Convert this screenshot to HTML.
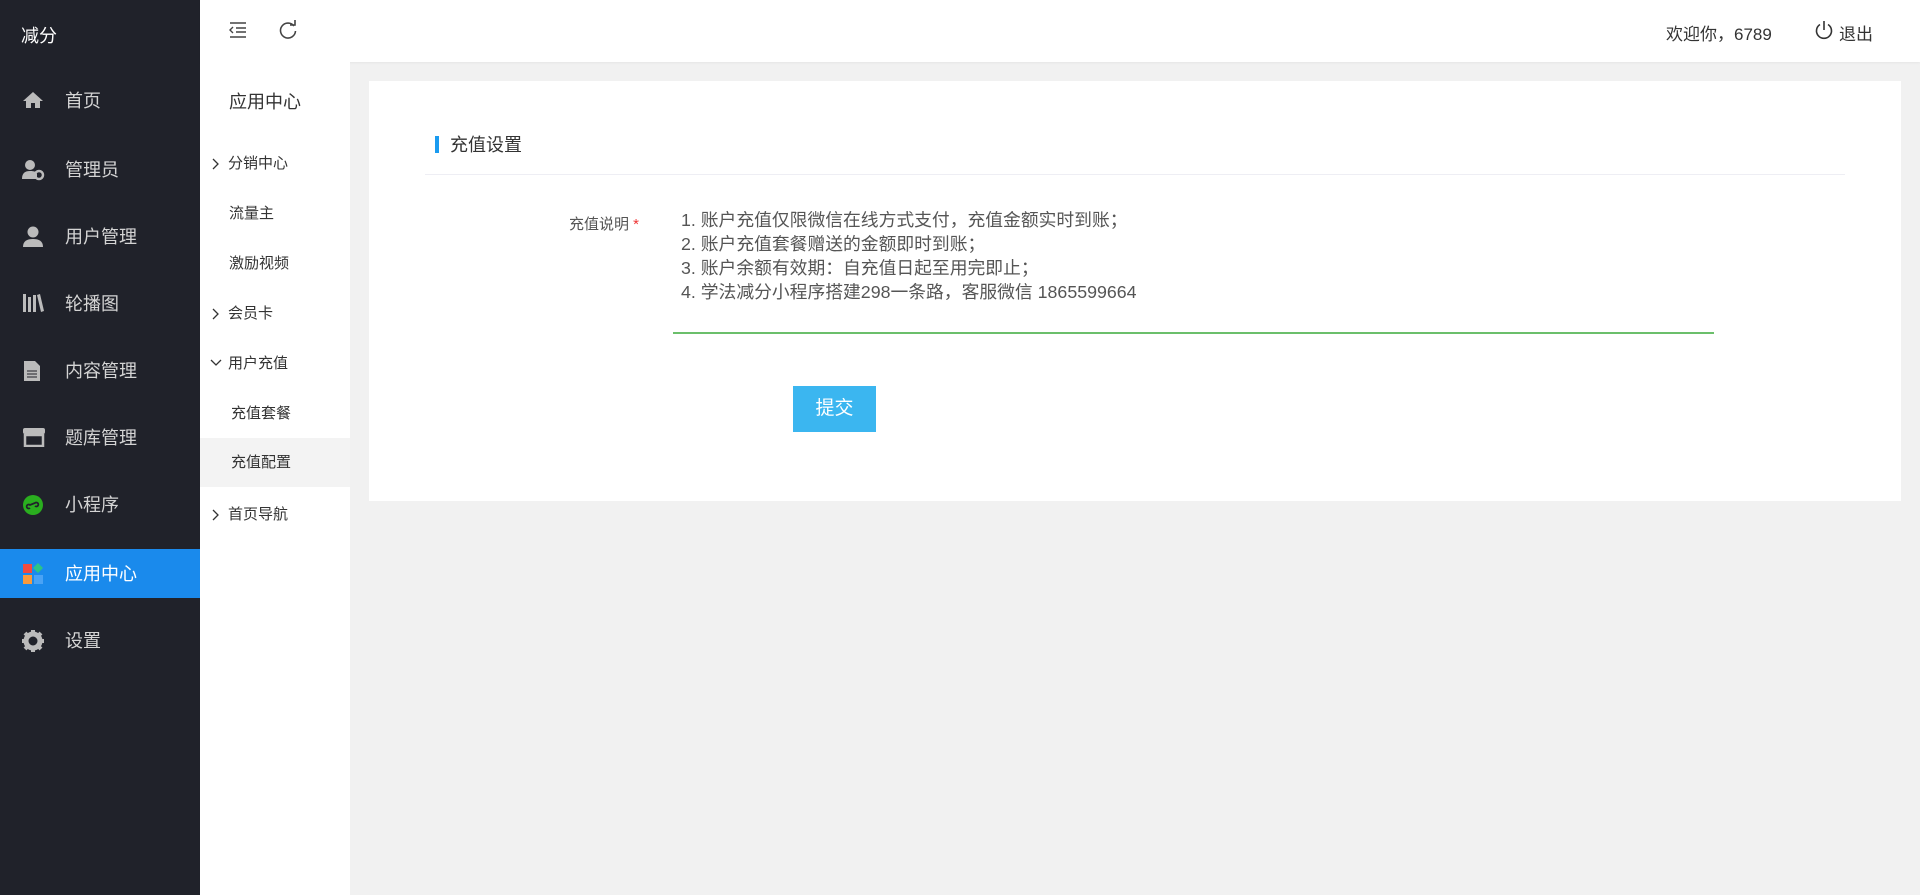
<!DOCTYPE html>
<html><head><meta charset="utf-8"><style>
*{margin:0;padding:0;box-sizing:border-box}
body{width:1920px;height:895px;overflow:hidden;background:#f1f1f1;font-family:"Liberation Sans","Noto Sans CJK SC",sans-serif;position:relative;color:#333}
.side{position:absolute;left:0;top:0;width:200px;height:895px;background:#20222a}
.logo{position:absolute;left:21px;top:22px;color:#fff;font-size:18px}
.mi{position:absolute;left:0;width:200px;height:49px;color:#d4d4d4;font-size:18px;line-height:49px}
.mi span{position:absolute;left:65px;top:1px}
.mi svg{position:absolute;left:22px;top:14px}
.mi.act{background:#1a8aec;color:#fff}
.sub{position:absolute;left:200px;top:62px;width:150px;height:833px;background:#fff}
.si{position:absolute;left:0;width:150px;height:49px;line-height:49px;font-size:15px;color:#333}
.si.act{background:#f3f3f3}
.si svg{position:absolute;left:12px;top:19px}
.hdr{position:absolute;left:200px;top:0;width:1720px;height:62px;background:#fff;box-shadow:0 1px 2px rgba(0,0,0,.05)}
.card{position:absolute;left:369px;top:81px;width:1532px;height:420px;background:#fff}
</style></head><body>
<div class="side">
<div class="logo">减分</div>
<div class="mi" style="top:76px"><svg width="22" height="20" viewBox="0 0 22 20"><path d="M11 2L1 11h3v7h5v-5h4v5h5v-7h3z" fill="#bbb"/></svg><span>首页</span></div>
<div class="mi" style="top:145px"><svg width="24" height="22" viewBox="0 0 24 22"><circle cx="8" cy="6" r="5" fill="#bbb"/><path d="M0 20c0-6 3-8 8-8s6 1 7 3v5z" fill="#bbb"/><circle cx="17" cy="16" r="4" fill="none" stroke="#bbb" stroke-width="2.5"/></svg><span>管理员</span></div>
<div class="mi" style="top:212px"><svg width="22" height="22" viewBox="0 0 22 22"><circle cx="11" cy="6" r="5.5" fill="#bbb"/><path d="M1 21c0-6 4-8 10-8s10 2 10 8z" fill="#bbb"/></svg><span>用户管理</span></div>
<div class="mi" style="top:279px"><svg width="22" height="20" viewBox="0 0 22 20"><rect x="1" y="1" width="3" height="18" fill="#bbb"/><rect x="6" y="4" width="3" height="15" fill="#bbb"/><rect x="11" y="2" width="3" height="17" fill="#bbb"/><path d="M15 2l3-1 4 17-3 1z" fill="#bbb"/></svg><span>轮播图</span></div>
<div class="mi" style="top:346px"><svg width="20" height="22" viewBox="0 0 20 22"><path d="M2 1h11l5 5v15H2z" fill="#bbb"/><path d="M5 11h10M5 14h10M5 17h10" stroke="#20222a" stroke-width="1"/></svg><span>内容管理</span></div>
<div class="mi" style="top:413px"><svg width="24" height="20" viewBox="0 0 24 20"><rect x="1" y="1" width="22" height="6" rx="2" fill="#bbb"/><rect x="3" y="8" width="18" height="11" fill="none" stroke="#bbb" stroke-width="2.5"/></svg><span>题库管理</span></div>
<div class="mi" style="top:480px"><svg width="22" height="22" viewBox="0 0 22 22"><circle cx="11" cy="11" r="10" fill="#2aae1f"/><path d="M8 14a2 2 0 1 1 0-3l5-2a2 2 0 1 1 0 3" stroke="#20222a" stroke-width="1.8" fill="none"/></svg><span>小程序</span></div>
<div class="mi act" style="top:549px"><svg width="22" height="22" viewBox="0 0 22 22"><rect x="1" y="1" width="9" height="9" fill="#f04b3f"/><path d="M16 0l5 5-5 5-5-5z" fill="#2bc486"/><rect x="1" y="12" width="9" height="9" fill="#f99a3c"/><rect x="12" y="12" width="9" height="9" fill="#4aa3f5"/></svg><span>应用中心</span></div>
<div class="mi" style="top:616px"><svg width="22" height="22" viewBox="0 0 22 22"><circle cx="11" cy="11" r="7" fill="none" stroke="#bbb" stroke-width="5"/><path d="M11 0v5M11 17v5M0 11h5M17 11h5M3 3l4 4M15 15l4 4M3 19l4-4M15 7l4-4" stroke="#bbb" stroke-width="4"/></svg><span>设置</span></div>
</div>
<div class="hdr">
<svg style="position:absolute;left:29px;top:22px" width="18" height="16" viewBox="0 0 18 16"><path d="M1 1h16M7 6h10M7 10h10M1 15h16M4 5l-3 3 3 3" stroke="#444" stroke-width="1.4" fill="none"/></svg>
<svg style="position:absolute;left:78px;top:20px" width="20" height="20" viewBox="0 0 20 20"><path d="M16 6A7.5 7.5 0 1 0 17.5 11" stroke="#444" stroke-width="1.6" fill="none"/><path d="M12 5h5V0" stroke="#444" stroke-width="1.6" fill="none"/></svg>
<div style="position:absolute;left:1466px;top:20px;font-size:17px;color:#333">欢迎你，6789</div>
<svg style="position:absolute;left:1614px;top:20px" width="20" height="21" viewBox="0 0 20 21"><path d="M6 4.5a7.5 7.5 0 1 0 8 0" stroke="#333" stroke-width="1.6" fill="none"/><path d="M10 1v9" stroke="#333" stroke-width="1.6"/></svg>
<div style="position:absolute;left:1639px;top:20px;font-size:17px;color:#333">退出</div>
</div>
<div class="sub">
<div class="si" style="top:16px;left:29px;font-size:18px">应用中心</div>
<div class="si" style="top:77px;padding-left:28px"><svg width="8" height="12" viewBox="0 0 8 12"><path d="M1 1l5 5-5 5" stroke="#333" stroke-width="1.3" fill="none"/></svg>分销中心</div>
<div class="si" style="top:127px;padding-left:29px">流量主</div>
<div class="si" style="top:177px;padding-left:29px">激励视频</div>
<div class="si" style="top:227px;padding-left:28px"><svg width="8" height="12" viewBox="0 0 8 12"><path d="M1 1l5 5-5 5" stroke="#333" stroke-width="1.3" fill="none"/></svg>会员卡</div>
<div class="si" style="top:277px;padding-left:28px"><svg width="12" height="8" viewBox="0 0 12 8" style="left:10px;top:20px"><path d="M1 1l5 5 5-5" stroke="#333" stroke-width="1.3" fill="none"/></svg>用户充值</div>
<div class="si" style="top:327px;padding-left:31px">充值套餐</div>
<div class="si act" style="top:376px;padding-left:31px">充值配置</div>
<div class="si" style="top:428px;padding-left:28px"><svg width="8" height="12" viewBox="0 0 8 12"><path d="M1 1l5 5-5 5" stroke="#333" stroke-width="1.3" fill="none"/></svg>首页导航</div>
</div>
<div class="card">
<div style="position:absolute;left:66px;top:55px;width:4px;height:17px;background:#1a9bf0"></div>
<div style="position:absolute;left:81px;top:50px;font-size:18px;color:#333">充值设置</div>
<div style="position:absolute;left:56px;top:93px;width:1420px;height:1px;background:#eeeef4"></div>
<div style="position:absolute;left:200px;top:132px;font-size:15px;color:#555">充值说明 <span style="color:#e33">*</span></div>
<div style="position:absolute;left:304px;top:127px;width:1041px;height:126px;border-bottom:2px solid #6bbf6b;font-size:17.8px;line-height:24px;color:#555;padding-left:8px">1. 账户充值仅限微信在线方式支付，充值金额实时到账；<br>2. 账户充值套餐赠送的金额即时到账；<br>3. 账户余额有效期：自充值日起至用完即止；<br>4. 学法减分小程序搭建298一条路，客服微信 1865599664</div>
<div style="position:absolute;left:424px;top:305px;width:83px;height:46px;background:#3bb6f0;color:#fff;font-size:19px;line-height:46px;text-align:center">提交</div>
</div>
</body></html>
